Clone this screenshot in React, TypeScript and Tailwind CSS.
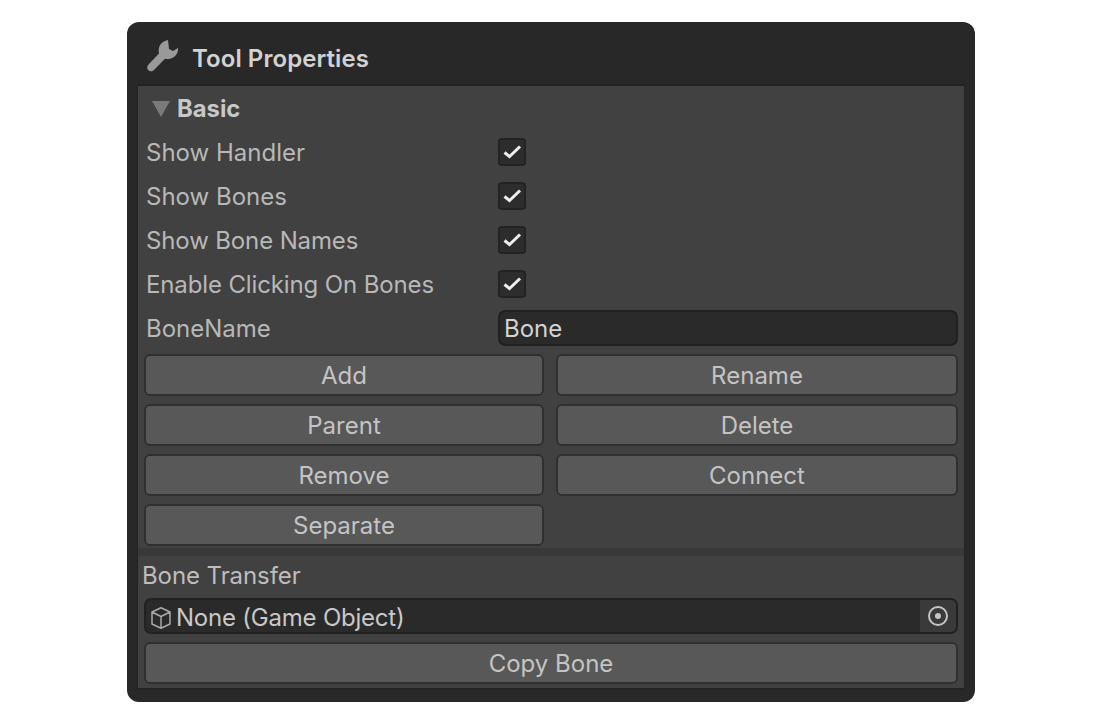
import React from 'react';

const rows = [
  { label: 'Show Handler', cls: '' },
  { label: 'Show Bones', cls: '' },
  { label: 'Show Bone Names', cls: 'tracking-[-0.13px]' },
  { label: 'Enable Clicking On Bones', cls: 'tracking-[-0.13px]' },
];
const buttons = ['Add', 'Rename', 'Parent', 'Delete', 'Remove', 'Connect', 'Separate'];

const Btn = ({ label }: { label: string }) => (
  <button className="h-[42px] rounded-[6px] border-2 border-[#303030] bg-[#585858] pt-[2px] text-[24px] leading-none text-[#c4c4c4]">
    {label}
  </button>
);

const CheckBox = () => (
  <div className="flex h-[28px] w-[28px] items-center justify-center rounded-[4px] border-2 border-[#232323] bg-[#2d2d2d]">
    <svg width="20" height="16" viewBox="0 0 20 16" fill="none">
      <path d="M2.5 8.5 L7.5 12.5 L18 2.5" stroke="#eeeeee" strokeWidth="3" />
    </svg>
  </div>
);

export default function App() {
  return (
    <div className="min-h-[723px] bg-white pt-[22px] pl-[127px] font-['Inter',sans-serif]">
      <div className="flex h-[680px] w-[848px] flex-col rounded-[12px] bg-[#282828] px-[10px]">
        <div className="flex h-[62px] shrink-0 items-center pl-[10px] pt-[11px]">
          <svg width="34" height="34" viewBox="0 0 34 34" className="mb-[6px]">
            <path
              d="M21 1 L22 10 L26 12 L31 9 C31.5 14 28 19 22 20 C20.5 20.3 19 20 18 19.7 L7 31 C5 33 2 32.5 0.8 30.5 C-0.2 29 0 27 1.5 25.5 L12 14.5 C11 10 12 3 21 1 Z"
              fill="#999999"
            />
          </svg>
          <span className="ml-[11px] text-[24px] font-semibold leading-none tracking-[0.07px] text-[#d2d2d2]">Tool Properties</span>
        </div>

        <div className="flex h-[606px] shrink-0 flex-col border-x border-y-2 border-[#232323] bg-[#414141]">
          <div className="flex h-[44px] items-center pl-[14px] pt-[2px]">
            <svg width="18" height="16" viewBox="0 0 18 16">
              <path d="M0 0 H18 L9 16 Z" fill="#7a7a7a" />
            </svg>
            <span className="ml-[7px] text-[23.8px] font-bold leading-none text-[#c8c8c8]">Basic</span>
          </div>

          {rows.map((r) => (
            <div key={r.label} className="flex h-[44px] items-center pl-[8px]">
              <span className={`mt-[2px] w-[352px] text-[24px] leading-none text-[#b8b8b8] ${r.cls}`}>{r.label}</span>
              <CheckBox />
            </div>
          ))}

          <div className="flex h-[44px] items-center pl-[8px] pr-[6px]">
            <span className="mt-[2px] w-[352px] text-[24px] leading-none text-[#b8b8b8]">BoneName</span>
            <div className="flex h-[36px] flex-1 items-center rounded-[7px] border-2 border-[#212121] bg-[#2a2a2a] pl-[4px] pt-[2px] text-[24px] leading-none text-[#d2d2d2]">
              Bone
            </div>
          </div>

          <div className="mt-[4px] grid grid-cols-[400px_402px] gap-x-[12px] gap-y-[8px] pl-[6px]">
            {buttons.map((b) => (
              <Btn key={b} label={b} />
            ))}
          </div>

          <div className="mt-[2px] h-[8px] shrink-0 bg-[#393939]" />

          <div className="flex h-[40px] items-center pl-[4px] text-[24px] leading-none tracking-[-0.08px] text-[#bdbdbd]">Bone Transfer</div>

          <div className="ml-[6px] mr-[6px] mt-[2px] flex h-[36px] items-center overflow-hidden rounded-[7px] border-2 border-[#212121] bg-[#2a2a2a]">
            <svg width="24" height="24" viewBox="0 0 24 24" fill="none" stroke="#aaaaaa" strokeWidth="1.5" strokeLinejoin="round" className="ml-[3px] mt-[3px] shrink-0">
              <path d="M12 1.75 L21 6 V18 L12 22.25 L3 18 V6 Z M3 6 L12 10.5 L21 6 M12 10.5 V22.25" />
            </svg>
            <span className="ml-[3px] mt-[4px] flex-1 text-[24px] leading-none tracking-[-0.22px] text-[#c8c8c8]">None (Game Object)</span>
            <div className="flex h-full w-[36px] items-center justify-center bg-[#3a3a3a]">
              <svg width="22" height="22" viewBox="0 0 22 22" fill="none">
                <circle cx="11" cy="11" r="9" stroke="#c4c4c4" strokeWidth="2" />
                <circle cx="11" cy="11" r="3" fill="#c4c4c4" />
              </svg>
            </div>
          </div>

          <div className="ml-[6px] mr-[6px] mt-[8px] flex flex-col">
            <Btn label="Copy Bone" />
          </div>
        </div>
      </div>
    </div>
  );
}
